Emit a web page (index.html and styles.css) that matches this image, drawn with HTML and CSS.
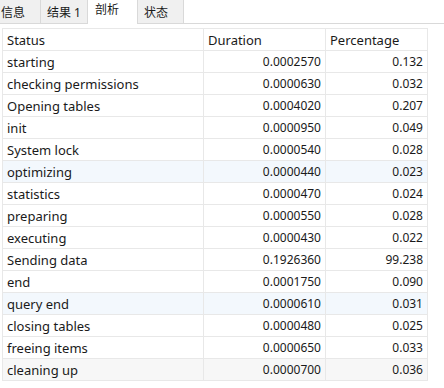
FILE: index.html
```html
<!DOCTYPE html>
<html lang="zh">
<head>
  <meta charset="UTF-8" />
  <title>剖析</title>
  <link rel="stylesheet" href="styles.css">
</head>
<body>
  <!-- Вкладки -->
  <div class="tabs">
    <div class="tab">信息</div>
    <div class="tab">结果 1</div>
    <div class="tab active">剖析</div>
    <div class="tab">状态</div>
  </div>

  <!-- Таблица профиля -->
  <table class="grid">
    <colgroup>
      <col class="c-status" />
      <col class="c-dur" />
      <col class="c-pct" />
    </colgroup>
    <thead>
      <tr>
        <th>Status</th>
        <th>Duration</th>
        <th>Percentage</th>
      </tr>
    </thead>
    <tbody>
      <tr><td>starting</td><td class="num">0.0002570</td><td class="num">0.132</td></tr>
      <tr><td>checking permissions</td><td class="num">0.0000630</td><td class="num">0.032</td></tr>
      <tr><td>Opening tables</td><td class="num">0.0004020</td><td class="num">0.207</td></tr>
      <tr><td>init</td><td class="num">0.0000950</td><td class="num">0.049</td></tr>
      <tr><td>System lock</td><td class="num">0.0000540</td><td class="num">0.028</td></tr>
      <tr class="hl"><td>optimizing</td><td class="num">0.0000440</td><td class="num">0.023</td></tr>
      <tr><td>statistics</td><td class="num">0.0000470</td><td class="num">0.024</td></tr>
      <tr><td>preparing</td><td class="num">0.0000550</td><td class="num">0.028</td></tr>
      <tr><td>executing</td><td class="num">0.0000430</td><td class="num">0.022</td></tr>
      <tr><td>Sending data</td><td class="num">0.1926360</td><td class="num">99.238</td></tr>
      <tr><td>end</td><td class="num">0.0001750</td><td class="num">0.090</td></tr>
      <tr class="hl"><td>query end</td><td class="num">0.0000610</td><td class="num">0.031</td></tr>
      <tr><td>closing tables</td><td class="num">0.0000480</td><td class="num">0.025</td></tr>
      <tr><td>freeing items</td><td class="num">0.0000650</td><td class="num">0.033</td></tr>
      <tr class="alt"><td>cleaning up</td><td class="num">0.0000700</td><td class="num">0.036</td></tr>
    </tbody>
  </table>
</body>
</html>
```

FILE: styles.css
```css
body {
  margin: 0;
  background: #ffffff;
  color: #1a1a1a;
  font-family: "Noto Sans", "Noto Sans CJK SC", sans-serif;
  font-size: 13px;
}

.tabs {
  display: flex;
  height: 23px;
  margin-left: -6px;
  border-bottom: 1px solid #d9d9d9;
  font-size: 12px;
}

.tab {
  box-sizing: border-box;
  min-width: 47px;
  height: 23px;
  padding: 4px 6px 0;
  line-height: 18px;
  background: #f0f0f0;
  border: 1px solid #d9d9d9;
  border-top: none;
  border-bottom: none;
  margin-right: -1px;
}

.tab.active {
  min-width: 51px;
  height: 24px;
  padding: 1px 7px 0;
  background: #ffffff;
  position: relative;
  z-index: 1;
}

.grid {
  margin: 4px 0 0 2px;
  border-collapse: collapse;
  table-layout: fixed;
  width: 425px;
  border: 1px solid #dcdcdc;
}

.c-status { width: 201px; }
.c-dur { width: 122px; }
.c-pct { width: 102px; }

.grid th,
.grid td {
  height: 21px;
  padding: 0 4px;
  border: 1px solid #e8e8e8;
  text-align: left;
  font-weight: 400;
  white-space: nowrap;
  overflow: hidden;
}

.grid td.num {
  text-align: right;
  font-size: 12px;
}

.grid tr.hl td {
  background: #f3f8fd;
}

.grid tr.alt td {
  background: #f7f7f7;
}
```
